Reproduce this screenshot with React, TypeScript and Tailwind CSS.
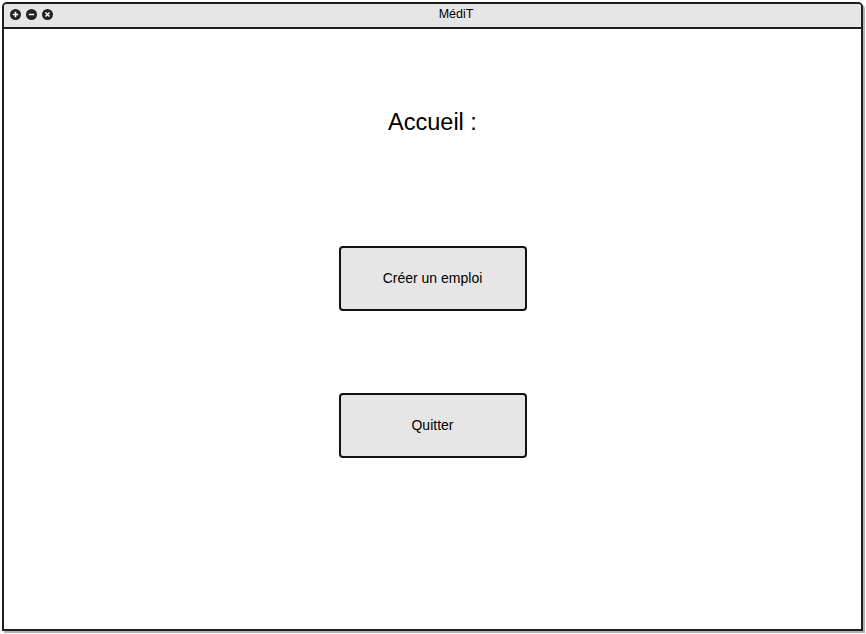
import React from "react";

const WindowButton = ({ kind }: { kind: "plus" | "minus" | "close" }) => {
  return (
    <svg width="11" height="11" viewBox="0 0 11 11">
      <circle cx="5.5" cy="5.5" r="5.5" fill="#222" />
      {kind === "plus" && (
        <path d="M5.5 2.8v5.4M2.8 5.5h5.4" stroke="#fff" strokeWidth="1.6" />
      )}
      {kind === "minus" && (
        <path d="M2.8 5.5h5.4" stroke="#fff" strokeWidth="1.6" />
      )}
      {kind === "close" && (
        <path d="M3.5 3.5l4 4M7.5 3.5l-4 4" stroke="#fff" strokeWidth="1.5" />
      )}
    </svg>
  );
};

const MenuButton = ({ label }: { label: string }) => (
  <button className="w-[188px] h-[65px] bg-[#e6e6e6] border-2 border-[#111] rounded-[4px] text-[14px] text-black">
    {label}
  </button>
);

export default function App() {
  return (
    <div
      className="w-[866px] h-[634px] bg-white p-[2px]"
      style={{ fontFamily: '"Liberation Sans", Arial, sans-serif' }}
    >
      <div className="w-[861px] h-[629px] flex flex-col border-2 border-[#1e1e1e] rounded-t-[5px] bg-white shadow-[2px_2px_0_#b3b3b3] overflow-hidden">
        <div className="h-[25px] pb-[3px] flex items-center bg-[#e6e6e6] border-b-2 border-[#1e1e1e]">
          <div className="flex items-center gap-[5px] pl-[6px]">
            <WindowButton kind="plus" />
            <WindowButton kind="minus" />
            <WindowButton kind="close" />
          </div>
          <div className="flex-1 text-center text-[12.5px] text-black pr-[2px]">MédiT</div>
        </div>
        <div className="flex flex-col items-center">
          <h1 className="mt-[79px] text-[23.5px] leading-[28px] text-black">Accueil :</h1>
          <div className="mt-[110px] flex flex-col items-center gap-[82px]">
            <MenuButton label="Créer un emploi" />
            <MenuButton label="Quitter" />
          </div>
        </div>
      </div>
    </div>
  );
}
